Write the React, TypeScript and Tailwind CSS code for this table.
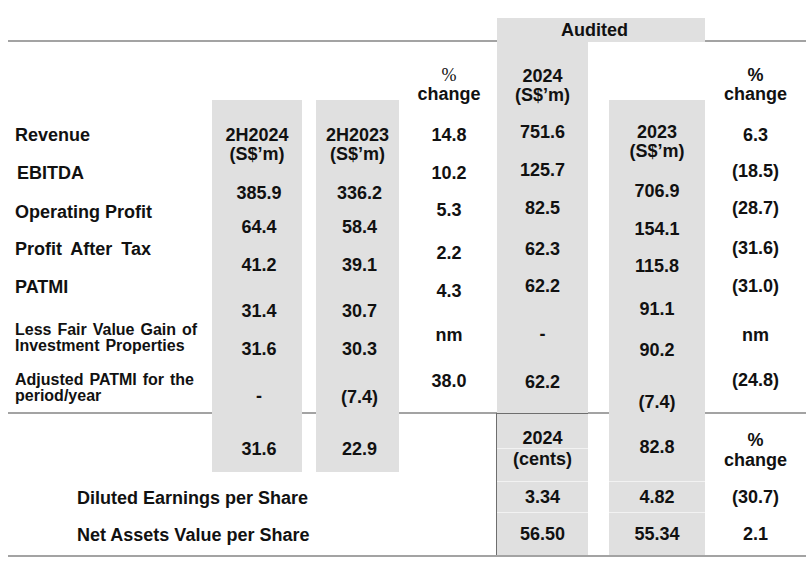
import React from 'react';

// Financial highlights slide: 2H / full-year comparison table

export default function App() {
  return (
    <div className="relative w-[806px] h-[571px] overflow-hidden bg-white text-[#111] font-bold text-[18px] leading-[20px] font-['Liberation_Sans',Arial,sans-serif]">
      {/* horizontal rules sit under the shaded columns */}
      <div className="absolute left-[8px] right-0 top-[40px] h-[2px] bg-[#a3a3a3]" />
      <div className="absolute left-[8px] right-0 top-[412px] h-[2px] bg-[#a3a3a3]" />
      <div className="absolute left-[8px] right-0 top-[555px] h-[2px] bg-[#a3a3a3]" />

      <div className="relative flex items-start">
        {/* Row labels */}
        <div className="w-[212px] shrink-0 pl-[15px] flex flex-col whitespace-nowrap">
          <div className="mt-[125px]">Revenue</div>
          <div className="mt-[18px] pl-[2px]">EBITDA</div>
          <div className="mt-[19px]">Operating Profit</div>
          <div className="mt-[17px] [word-spacing:4px]">Profit After Tax</div>
          <div className="mt-[18px]">PATMI</div>
          <div className="mt-[25px] text-[16px] leading-[16px] [word-spacing:1.5px]">
            Less Fair Value Gain of
            <br />
            Investment Properties
          </div>
          <div className="mt-[18px] text-[16px] leading-[16px] [word-spacing:1.5px]">
            Adjusted PATMI for the
            <br />
            period/year
          </div>
          <div className="mt-[84px] pl-[62px]">Diluted Earnings per Share</div>
          <div className="mt-[17px] pl-[62px]">Net Assets Value per Share</div>
        </div>

        {/* 2H2024 */}
        <div className="mt-[100px] w-[90px] h-[372px] shrink-0 bg-[#e0e0e0] flex flex-col items-center whitespace-nowrap">
          <div className="mt-[26px] leading-[19px] text-center">
            2H2024
            <br />
            (S$’m)
          </div>
          <div className="mt-[19px] pl-[4px]">385.9</div>
          <div className="mt-[14px] pl-[4px]">64.4</div>
          <div className="mt-[18px] pl-[4px]">41.2</div>
          <div className="mt-[26px] pl-[4px]">31.4</div>
          <div className="mt-[18px] pl-[4px]">31.6</div>
          <div className="mt-[27px] pl-[4px]">-</div>
          <div className="mt-[33px] pl-[4px]">31.6</div>
        </div>

        {/* 2H2023 */}
        <div className="mt-[100px] ml-[14px] w-[83px] h-[372px] shrink-0 bg-[#e0e0e0] flex flex-col items-center whitespace-nowrap">
          <div className="mt-[26px] leading-[19px] text-center">
            2H2023
            <br />
            (S$’m)
          </div>
          <div className="mt-[19px] pl-[4px]">336.2</div>
          <div className="mt-[14px] pl-[4px]">58.4</div>
          <div className="mt-[18px] pl-[4px]">39.1</div>
          <div className="mt-[26px] pl-[4px]">30.7</div>
          <div className="mt-[18px] pl-[4px]">30.3</div>
          <div className="mt-[28px] pl-[4px]">(7.4)</div>
          <div className="mt-[32px] pl-[4px]">22.9</div>
        </div>

        {/* % change (half year) */}
        <div className="ml-[10px] w-[80px] shrink-0 flex flex-col items-center whitespace-nowrap">
          <div className="mt-[66px] leading-[19px] text-center">
            <span className="font-normal font-['Liberation_Serif',serif]">%</span>
            <br />
            change
          </div>
          <div className="mt-[21px]">14.8</div>
          <div className="mt-[18px]">10.2</div>
          <div className="mt-[17px]">5.3</div>
          <div className="mt-[23px]">2.2</div>
          <div className="mt-[18px]">4.3</div>
          <div className="mt-[24px]">nm</div>
          <div className="mt-[26px]">38.0</div>
        </div>

        {/* Audited full year */}
        <div className="ml-[8px] w-[208px] shrink-0 flex flex-col whitespace-nowrap">
          <div className="mt-[18px] h-[24px] bg-[#e0e0e0] flex items-center justify-center pr-[13px]">
            Audited
          </div>
          <div className="flex items-start">
            {/* 2024 */}
            <div className="w-[91px] shrink-0 bg-[#e0e0e0] flex flex-col">
              <div className="h-[371px] flex flex-col items-center">
                <div className="mt-[25px] leading-[19px] text-center">
                  2024
                  <br />
                  (S$’m)
                </div>
                <div className="mt-[17px]">751.6</div>
                <div className="mt-[18px]">125.7</div>
                <div className="mt-[18px]">82.5</div>
                <div className="mt-[21px]">62.3</div>
                <div className="mt-[17px]">62.2</div>
                <div className="mt-[28px]">-</div>
                <div className="mt-[28px]">62.2</div>
              </div>
              <div className="-ml-px h-[142px] border-l border-t border-[#6e6e6e] flex flex-col">
                <div className="h-[34px] flex items-end justify-center">2024</div>
                <div className="h-[33px] border-t border-[#f2f2f2] flex justify-center">(cents)</div>
                <div className="h-[31px] border-t border-[#f2f2f2] flex items-center justify-center">3.34</div>
                <div className="flex-1 border-t border-[#f2f2f2] flex items-center justify-center">56.50</div>
              </div>
            </div>

            {/* 2023 */}
            <div className="mt-[58px] ml-[21px] w-[96px] shrink-0 bg-[#e0e0e0] flex flex-col">
              <div className="h-[313px] flex flex-col items-center">
                <div className="mt-[23px] leading-[19px] text-center">
                  2023
                  <br />
                  (S$’m)
                </div>
                <div className="mt-[20px]">706.9</div>
                <div className="mt-[18px]">154.1</div>
                <div className="mt-[17px]">115.8</div>
                <div className="mt-[23px]">91.1</div>
                <div className="mt-[21px]">90.2</div>
                <div className="mt-[32px]">(7.4)</div>
              </div>
              <div className="h-[142px] flex flex-col">
                <div className="h-[68px] flex items-center justify-center">82.8</div>
                <div className="h-[31px] border-t border-[#f2f2f2] flex items-center justify-center">4.82</div>
                <div className="flex-1 border-t border-[#f2f2f2] flex items-center justify-center">55.34</div>
              </div>
            </div>
          </div>
        </div>

        {/* % change (full year) */}
        <div className="w-[101px] shrink-0 flex flex-col whitespace-nowrap">
          <div className="h-[413px] flex flex-col items-center">
            <div className="mt-[66px] leading-[19px] text-center">
              %
              <br />
              change
            </div>
            <div className="mt-[21px]">6.3</div>
            <div className="mt-[16px]">(18.5)</div>
            <div className="mt-[17px]">(28.7)</div>
            <div className="mt-[20px]">(31.6)</div>
            <div className="mt-[18px]">(31.0)</div>
            <div className="mt-[29px]">nm</div>
            <div className="mt-[25px]">(24.8)</div>
          </div>
          <div className="h-[142px] flex flex-col">
            <div className="h-[68px] pt-[17px] text-center">
              %
              <br />
              change
            </div>
            <div className="h-[31px] flex items-center justify-center">(30.7)</div>
            <div className="flex-1 flex items-center justify-center">2.1</div>
          </div>
        </div>
      </div>
    </div>
  );
}
